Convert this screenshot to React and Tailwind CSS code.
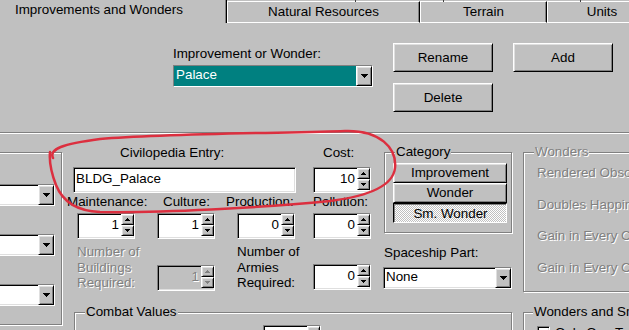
import React from "react";

const RAISED =
  "border border-t-white border-l-white border-r-black border-b-black shadow-[inset_1px_1px_0_#dfdfdf,inset_-1px_-1px_0_#808080]";
const SUNKEN =
  "border border-t-[#808080] border-l-[#808080] border-r-white border-b-white shadow-[inset_1px_1px_0_#000,inset_-1px_-1px_0_#dfdfdf]";
const ETCHED = "border border-[#808080] shadow-[inset_1px_1px_0_#fff,1px_1px_0_#fff]";
const DIS = "text-[#808080] [text-shadow:1px_1px_0_#fff]";
const TAB =
  "mt-[1px] shrink-0 h-[22px] border-t border-l border-b border-white border-r border-r-black shadow-[inset_-1px_0_0_#808080] text-center pt-[2px] whitespace-nowrap";

function Tri({ up, w = 7, h = 4, color = "#000" }) {
  const pts = up ? `0,${h} ${w},${h} ${w / 2},0` : `0,0 ${w},0 ${w / 2},${h}`;
  return (
    <svg width={w} height={h} viewBox={`0 0 ${w} ${h}`} shapeRendering="crispEdges">
      <polygon points={pts} fill={color} />
    </svg>
  );
}

function SpinBtn({ up, disabled }) {
  return (
    <div className={`${RAISED} bg-[#c0c0c0] w-[13px] h-[11px] flex items-center justify-center`}>
      <Tri up={up} w={5} h={3} color={disabled ? "#808080" : "#000"} />
    </div>
  );
}

function Spin({ value, disabled, className = "" }) {
  return (
    <div className={`${SUNKEN} ${disabled ? "bg-[#c0c0c0]" : "bg-white"} flex h-[26px] w-[58px] ${className}`}>
      <div className={`flex-1 text-right pr-[2px] pt-[1px] leading-[19px] ${disabled ? DIS : ""}`}>{value}</div>
      <div className="flex flex-col">
        <SpinBtn up disabled={disabled} />
        <SpinBtn disabled={disabled} />
      </div>
    </div>
  );
}

function DropBtn() {
  return (
    <div className={`${RAISED} bg-[#c0c0c0] w-[16px] h-full flex items-center justify-center shrink-0`}>
      <Tri />
    </div>
  );
}

function Select({ value, selected, className = "" }) {
  return (
    <div className={`${SUNKEN} bg-white flex h-[22px] ${className}`}>
      <div
        className={`flex-1 leading-[18px] pl-[2px] whitespace-nowrap overflow-hidden ${
          selected ? "bg-[#008080] text-white" : ""
        }`}
      >
        {value}
      </div>
      <DropBtn />
    </div>
  );
}

function Button({ children, className = "" }) {
  return (
    <div className={`${RAISED} bg-[#c0c0c0] flex items-center justify-center ${className}`}>{children}</div>
  );
}

function GroupLabel({ children, disabled, className = "" }) {
  return (
    <span
      className={`absolute -top-[9px] bg-[#c0c0c0] px-[1px] leading-[16px] whitespace-nowrap ${
        disabled ? DIS : ""
      } ${className}`}
    >
      {children}
    </span>
  );
}

export default function App() {
  return (
    <div className="relative w-[629px] h-[330px] overflow-hidden bg-[#c0c0c0] text-[13.4px] leading-[16px] text-black font-['Liberation_Sans',Arial,sans-serif]">
      {/* Tabs */}
      <div className="relative flex items-start h-[23px]">
        <div className="shrink-0 w-[227px] h-[23px] border-r border-black shadow-[inset_-1px_0_0_#808080] pl-[15px] pt-[2px] whitespace-nowrap">
          Improvements and Wonders
        </div>
        <div className={`${TAB} w-[193px]`}>Natural Resources</div>
        <div className={`${TAB} w-[127px]`}>Terrain</div>
        <div className={`${TAB} w-[110px]`}>Units</div>
        <span className="absolute left-[355px] top-0 w-[1px] h-[2px] bg-[#404040]" />
        <span className="absolute left-[443px] top-0 w-[1px] h-[2px] bg-[#404040]" />
        <span className="absolute left-[580px] top-0 w-[1px] h-[2px] bg-[#404040]" />
      </div>

      {/* Top section */}
      <div className="flex items-start h-[109px]">
        <div className="ml-[173px] mt-[23px] flex flex-col shrink-0">
          <div className="h-[16px] whitespace-nowrap">Improvement or Wonder:</div>
          <Select value="Palace" selected className="mt-[3px] w-[200px]" />
        </div>
        <div className="ml-[20px] mt-[20px] flex flex-col shrink-0">
          <Button className="w-[100px] h-[29px]">Rename</Button>
          <Button className="w-[100px] h-[29px] mt-[11px]">Delete</Button>
        </div>
        <div className="ml-[20px] mt-[20px] shrink-0">
          <Button className="w-[100px] h-[29px]">Add</Button>
        </div>
      </div>

      {/* Separator */}
      <div className="h-[2px] border-t border-t-[#808080] border-b border-b-white" />

      {/* Bottom section */}
      <div className="flex items-start">
        {/* Left group */}
        <div className={`-ml-[10px] mt-[18px] w-[72px] h-[173px] shrink-0 ${ETCHED} flex flex-col items-end pr-[6px] pt-[31px] gap-[28px]`}>
          <Select value="" className="w-[70px]" />
          <Select value="" className="w-[70px]" />
          <Select value="" className="w-[70px]" />
        </div>

        {/* Center */}
        <div className="ml-[5px] w-[445px] shrink-0 flex flex-col">
          <div className="flex h-[178px]">
            {/* Middle fields */}
            <div className="w-[304px] shrink-0 flex flex-col">
              <div className="mt-[11px] flex h-[16px] whitespace-nowrap">
                <div className="w-[246px] shrink-0 pl-[53px]">Civilopedia Entry:</div>
                <div className="pl-[10px]">Cost:</div>
              </div>
              <div className="mt-[6px] flex">
                <div className={`${SUNKEN} bg-white ml-[6px] w-[223px] shrink-0 h-[26px] pl-[2px] leading-[19px] pt-[1px]`}>
                  BLDG_Palace
                </div>
                <Spin value="10" className="ml-[17px] shrink-0" />
              </div>
              <div className="mt-[1px] flex h-[16px] whitespace-nowrap">
                <div className="w-[96px] shrink-0">Maintenance:</div>
                <div className="w-[63px] shrink-0">Culture:</div>
                <div className="w-[87px] shrink-0">Production:</div>
                <div>Pollution:</div>
              </div>
              <div className="mt-[3px] flex">
                <Spin value="1" className="ml-[10px] shrink-0" />
                <Spin value="1" className="ml-[22px] shrink-0" />
                <Spin value="0" className="ml-[22px] shrink-0" />
                <Spin value="0" className="ml-[18px] shrink-0" />
              </div>
              <div className="mt-[5px] flex items-start">
                <div className={`ml-[10px] w-[80px] shrink-0 leading-[15.5px] ${DIS}`}>
                  Number of
                  <br />
                  Buildings
                  <br />
                  Required:
                </div>
                <Spin value="1" disabled className="mt-[21px] shrink-0" />
                <div className="ml-[22px] w-[76px] shrink-0 leading-[15.5px]">
                  Number of
                  <br />
                  Armies
                  <br />
                  Required:
                </div>
                <Spin value="0" className="mt-[20px] shrink-0" />
              </div>
            </div>

            {/* Category column */}
            <div className="ml-[13px] w-[128px] shrink-0 flex flex-col">
              <div className={`relative mt-[18px] h-[81px] ${ETCHED} pt-[10px] pl-[8px]`}>
                <GroupLabel className="left-[10px]">Category</GroupLabel>
                <Button className="w-[114px] h-[20px]">Improvement</Button>
                <Button className="w-[114px] h-[20px]">Wonder</Button>
                <div className="w-[114px] h-[20px] border border-t-black border-l-black border-r-white border-b-white shadow-[inset_1px_1px_0_#808080] bg-[repeating-conic-gradient(#ffffff_0_25%,#c0c0c0_0_50%)] bg-[length:2px_2px] flex items-center justify-center pt-[1px] pl-[1px]">
                  <span>Sm. Wonder</span>
                </div>
              </div>
              <div className="mt-[12px] h-[16px] whitespace-nowrap">Spaceship Part:</div>
              <Select value="None" className="mt-[6px] w-[129px] -ml-[1px]" />
            </div>
          </div>

          {/* Combat Values */}
          <div className={`relative ml-[7px] w-[438px] h-[40px] ${ETCHED}`}>
            <GroupLabel className="left-[10px]">Combat Values</GroupLabel>
            <Spin value="" className="ml-[188px] mt-[12px]" />
          </div>
        </div>

        {/* Right column */}
        <div className="ml-[11px] flex flex-col shrink-0">
          <div className={`relative mt-[18px] w-[130px] h-[140px] ${ETCHED} pl-[13px] pt-[12px] flex flex-col gap-[15.5px] ${DIS}`}>
            <GroupLabel disabled className="left-[10px]">Wonders</GroupLabel>
            <div className="h-[16px] whitespace-nowrap">Rendered Obsolete By:</div>
            <div className="h-[16px] whitespace-nowrap">Doubles Happiness Of:</div>
            <div className="h-[16px] whitespace-nowrap">Gain in Every City:</div>
            <div className="h-[16px] whitespace-nowrap">Gain in Every City on:</div>
          </div>
          <div className={`relative mt-[20px] w-[130px] h-[40px] ${ETCHED} pl-[13px] pt-[13px] flex items-start`}>
            <GroupLabel className="left-[9px]">Wonders and Small Wonders</GroupLabel>
            <div className={`${SUNKEN} bg-white w-[13px] h-[13px] shrink-0`} />
            <span className="ml-[5px] -mt-[1px] whitespace-nowrap">Only One Type</span>
          </div>
        </div>
      </div>

      {/* Red hand-drawn ellipse */}
      <svg className="absolute left-0 top-0 pointer-events-none" width="629" height="330" viewBox="0 0 629 330">
        <path
          d="M 53 158 C 49 149, 62 144, 100 139 C 170 133, 300 133, 345 131 C 380 130, 397 148, 395 168 C 393 186, 370 196, 330 201 C 260 208, 160 213, 100 212 C 75 211, 62 200, 56 185 C 51 172, 49 162, 50 152"
          fill="none"
          stroke="#dc2f3f"
          strokeWidth="2.5"
          strokeLinecap="round"
          strokeLinejoin="round"
        />
      </svg>
    </div>
  );
}
